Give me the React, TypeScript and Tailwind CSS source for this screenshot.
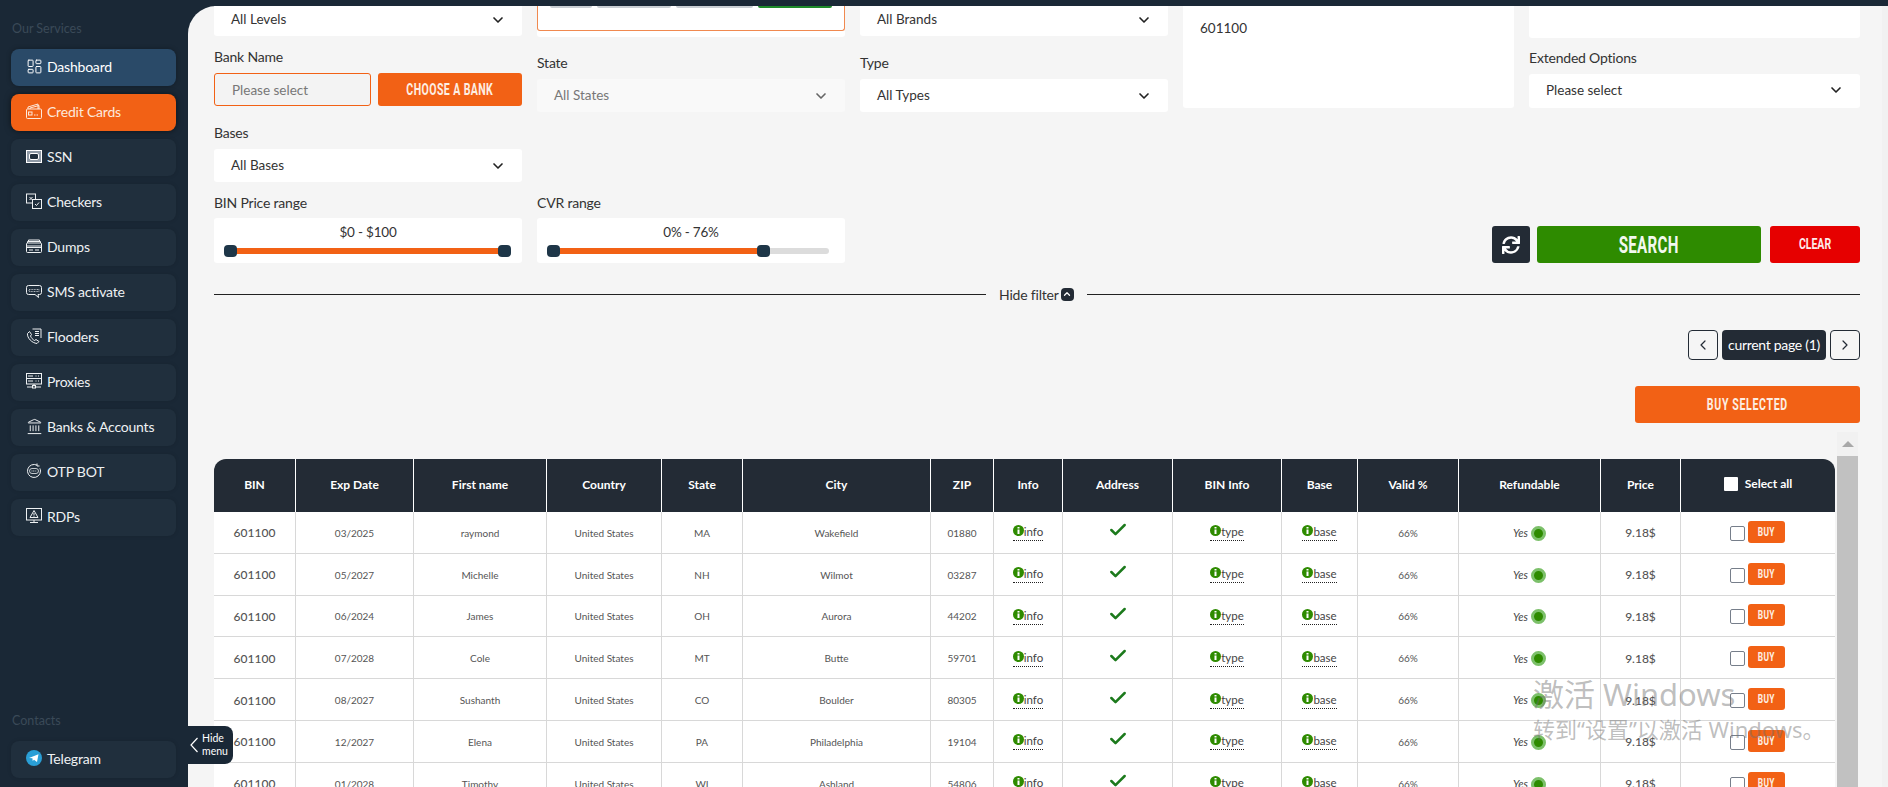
import React from 'react';
import { ChevronDown, ChevronLeft, ChevronRight, ChevronUp, Check, LayoutDashboard, Landmark } from 'lucide-react';
import { FaSync } from 'react-icons/fa';

const Ic = ({ children }: { children: React.ReactNode }) => (
  <svg width="16" height="16" viewBox="0 0 16 16" fill="none" stroke="currentColor" strokeWidth="1" className="shrink-0">
    {children}
  </svg>
);

const menu = [
  { label: 'Dashboard', icon: <LayoutDashboard size={17} strokeWidth={1.4} className="shrink-0 -mx-[0.5px]" />, kind: 'blue' },
  {
    label: 'Credit Cards',
    kind: 'orange',
    icon: (
      <Ic>
        <rect x="0.5" y="6" width="15" height="9.5" rx="1" />
        <path d="M2 6V4l10-3v5M4 6V5l9-2.5V6" />
        <rect x="2.5" y="9" width="3.5" height="3" />
        <path d="M8 12h5" strokeDasharray="1.5 1" />
      </Ic>
    ),
  },
  {
    label: 'SSN',
    icon: (
      <Ic>
        <rect x="0.5" y="2.5" width="15" height="12" fill="#8f9aa6" stroke="#fff" />
        <rect x="3.5" y="5.5" width="9" height="6" rx="1.5" fill="#202f3d" stroke="#fff" />
      </Ic>
    ),
  },
  {
    label: 'Checkers',
    icon: (
      <Ic>
        <rect x="0.5" y="1" width="9" height="9" />
        <rect x="6.5" y="6.5" width="9" height="9" fill="#202f3d" />
        <path d="M3.5 4l3 3M6.5 4l-3 3M9 11l1.5 1.5L13 9.5" />
      </Ic>
    ),
  },
  {
    label: 'Dumps',
    icon: (
      <Ic>
        <path d="M2.5 3.5V2h11v1.5M1.5 5V3.5h13V5" />
        <rect x="0.5" y="5" width="15" height="9.5" rx="1" />
        <path d="M0.5 8h15M0.5 9.5h15M3 12h4M9 12h4" />
      </Ic>
    ),
  },
  {
    label: 'SMS activate',
    icon: (
      <Ic>
        <path d="M2.5 2.5h11a2 2 0 0 1 2 2v5a2 2 0 0 1-2 2H12l.5 3L9 11.5H2.5a2 2 0 0 1-2-2v-5a2 2 0 0 1 2-2z" />
        <path d="M3 6.5h10v2H3z" strokeWidth="0.7" strokeDasharray="1 0.6" />
      </Ic>
    ),
  },
  {
    label: 'Flooders',
    icon: (
      <Ic>
        <path d="M1.5 5.5l2-2 2 3-1 1.5c.8 2 2.2 3.5 4 4.5l1.5-1 3 2-2 2C6 15 1 10 1.500 5.500z" />
        <path d="M6.500 1h8.500v9M9 3.500h4M9 5.500h4M9 7.500h4" />
      </Ic>
    ),
  },
  {
    label: 'Proxies',
    icon: (
      <Ic>
        <rect x="0.500" y="0.500" width="15" height="5" />
        <rect x="0.500" y="5.500" width="15" height="5.500" />
        <path d="M2 3h5M9.500 3h1M12 3h1M2 8h5M9.500 8h1M12 8h1M8 11v2.500M1 14h5.500M9.500 14H15" />
        <rect x="6.500" y="12.500" width="3" height="2.500" />
      </Ic>
    ),
  },
  { label: 'Banks & Accounts', icon: <Landmark size={17} strokeWidth={1.4} className="shrink-0 -mx-[0.5px]" /> },
  {
    label: 'OTP BOT',
    icon: (
      <Ic>
        <path d="M14.500 8A6.500 6.500 0 1 1 11 2.200M14.500 8c0-1-.2-1.800-.6-2.600M11 0.500v2.500h2.500" />
        <rect x="3.500" y="5.500" width="9" height="5" rx="2.500" strokeWidth="0.8" />
        <path d="M5.500 8h5" strokeWidth="0.8" strokeDasharray="1 0.6" />
      </Ic>
    ),
  },
  {
    label: 'RDPs',
    icon: (
      <Ic>
        <rect x="0.500" y="0.500" width="15" height="11.500" />
        <path d="M8 2.500l4 7H4zM8 5v2.500M8 8.300v.700M4 14.500h8M8 12v2.500" />
      </Ic>
    ),
  },
];

const SideItem = ({ label, icon, kind }: { label: string; icon: React.ReactNode; kind?: string }) => (
  <div
    className={
      'flex h-[37px] w-[165px] items-center gap-[5px] rounded-[8px] pb-[3px] pl-[15px] pr-1 text-[14px] tracking-[-0.2px] ' +
      (kind === 'orange'
        ? 'bg-[#f26115] text-[#fde9dc] shadow-[0_0_6px_rgba(0,0,0,0.55)]'
        : kind === 'blue'
          ? 'bg-[#2a4a68] text-white shadow-[0_0_5px_rgba(0,0,0,0.3)]'
          : 'bg-[#202f3d] text-[#eef1f3] shadow-[0_0_4px_rgba(0,0,0,0.12)]')
    }
  >
    {icon}
    <span className="whitespace-nowrap">{label}</span>
  </div>
);

const Sidebar = () => (
  <aside className="flex h-[787px] w-[188px] shrink-0 flex-col justify-between bg-[#1a2836] pb-[9px] pl-[11px] pt-[21px]">
    <div>
      <div className="ml-px h-[16px] text-[12.5px] leading-[16px] text-[#3a4a58]">Our Services</div>
      <div className="mt-[12px] flex flex-col gap-[8px]">
        {menu.map((m) => (
          <SideItem key={m.label} {...m} />
        ))}
      </div>
    </div>
    <div>
      <div className="mb-[12px] ml-px h-[16px] text-[12.5px] leading-[16px] text-[#3a4a58]">Contacts</div>
      <SideItem
        label="Telegram"
        icon={
          <svg width="16" height="16" viewBox="0 0 16 16" className="shrink-0">
            <circle cx="8" cy="8" r="8" fill="#2a9fd6" />
            <path d="M3 8l9.500-3.700L11 12 8 9.800 6.700 11l-.3-2.700L3 8z" fill="#fff" />
          </svg>
        }
      />
    </div>
  </aside>
);

const Label = ({ children, className = '' }: { children: React.ReactNode; className?: string }) => (
  <div className={'h-[20px] text-[14px] leading-[20px] tracking-[-0.2px] text-[#333] ' + className}>{children}</div>
);

const Select = ({ text, disabled, className = '' }: { text: string; disabled?: boolean; className?: string }) => (
  <div
    className={
      'flex h-[33px] items-center justify-between rounded-[3px] pl-[17px] pr-[16px] text-[13.5px] ' +
      (disabled ? 'bg-[#f9f9f9] text-[#777] ' : 'bg-white text-[#333] ') +
      className
    }
  >
    <span>{text}</span>
    <ChevronDown size={16} strokeWidth={2.5} className={disabled ? 'text-[#666]' : 'text-[#222]'} />
  </div>
);

// buttons use a narrow display face in the original, squeezed Roboto stands in for it
const Narrow = ({ children, className = '' }: { children: React.ReactNode; className?: string }) => (
  <span className={'inline-block whitespace-nowrap font-["Roboto",sans-serif] font-bold ' + className}>{children}</span>
);

const Slider = ({ text, end, wide }: { text: string; end: number; wide?: boolean }) => (
  <div className="h-[45px] rounded-[3px] bg-white pt-[4px]">
    <div className="text-center text-[13.5px] leading-[20px] tracking-[-0.2px] text-[#333]">{text}</div>
    <div className={'relative ml-[10px] mt-[6px] h-[6px] rounded-full bg-[#dcdcdc] ' + (wide ? 'mr-[11px]' : 'mr-[16px]')}>
      <div className="h-[6px] rounded-full bg-[#f26115]" style={{ width: `${end}%` }} />
      <span className="absolute -top-[3px] left-0 h-[12px] w-[13px] rounded-[4px] bg-[#1e3648]" />
      <span className="absolute -top-[3px] h-[12px] w-[13px] -translate-x-full rounded-[4px] bg-[#1e3648]" style={{ left: `${end}%` }} />
    </div>
  </div>
);

const Filters = () => (
  <>
    <div className="-mt-[3px] grid grid-cols-[308px_308px_308px_331px_331px] gap-x-[15px]">
      <div>
        <Select text="All Levels" />
        <Label className="mt-[11px]">Bank Name</Label>
        <div className="mt-[6px] flex h-[33px] gap-[7px]">
          <div className="flex w-[157px] items-center rounded-[3px] border border-[#f26115] bg-[#f3f3f3] pl-[17px] pt-[1px] text-[13.5px] text-[#777]">
            Please select
          </div>
          <div className="flex flex-1 items-center justify-center rounded-[3px] bg-[#f26115] text-[#fdeee3]">
            <Narrow className="scale-x-[0.66] text-[16px] tracking-[0.6px]">CHOOSE A BANK</Narrow>
          </div>
        </div>
        <Label className="mt-[17px]">Bases</Label>
        <Select text="All Bases" className="mt-[6px]" />
      </div>
      <div>
        <div className="h-[34px] rounded-[3px] bg-white">
          <div className="flex h-[28px] gap-[5px] rounded-b-[3px] border border-t-0 border-[#f0894f] px-[12px]">
            <div className="h-[5px] w-[42px] rounded-b-[2px] bg-[#c9ced3]" />
            <div className="h-[5px] w-[74px] rounded-b-[2px] bg-[#c9ced3]" />
            <div className="h-[5px] w-[78px] rounded-b-[2px] bg-[#c9ced3]" />
            <div className="h-[5px] w-[74px] rounded-b-[2px] bg-[#1f8a2a]" />
          </div>
        </div>
        <Label className="mt-[16px]">State</Label>
        <Select text="All States" disabled className="mt-[6px]" />
      </div>
      <div>
        <Select text="All Brands" />
        <Label className="mt-[17px]">Type</Label>
        <Select text="All Types" className="mt-[6px]" />
      </div>
      <div className="h-[105px] rounded-[3px] bg-white pl-[17px] pt-[15px] text-[13.5px] leading-[20px] text-[#333]">601100</div>
      <div>
        <div className="h-[35px] rounded-[3px] bg-white" />
        <Label className="mt-[10px]">Extended Options</Label>
        <Select text="Please select" className="mt-[6px] h-[34px] pb-[2px]" />
      </div>
    </div>

    <div className="mt-[11px] grid grid-cols-[308px_308px_1fr] gap-x-[15px]">
      <div>
        <Label>BIN Price range</Label>
        <div className="mt-[5px]">
          <Slider text="$0 - $100" end={100} wide />
        </div>
      </div>
      <div>
        <Label>CVR range</Label>
        <div className="mt-[5px]">
          <Slider text="0% - 76%" end={79} />
        </div>
      </div>
      <div className="flex items-end justify-end">
        <div className="mr-[7px] flex h-[37px] w-[38px] items-center justify-center rounded-[3px] bg-[#232b35] text-white">
          <FaSync size={18} />
        </div>
        <div className="mr-[9px] flex h-[37px] w-[224px] items-center justify-center rounded-[3px] bg-[#2e8b00] text-[#f2f8ee]">
          <Narrow className="scale-x-[0.63] text-[24px] tracking-[0.5px]">SEARCH</Narrow>
        </div>
        <div className="flex h-[37px] w-[90px] items-center justify-center rounded-[3px] bg-[#e60000] text-[#fdeaea]">
          <Narrow className="scale-x-[0.7] text-[15px]">CLEAR</Narrow>
        </div>
      </div>
    </div>

    <div className="mt-[21px] flex h-[20px] items-center">
      <div className="h-px w-[772px] bg-[#222]" />
      <div className="ml-[13px] flex w-[77px] shrink-0 items-center gap-[2px] text-[14px] tracking-[-0.2px] text-[#333]">
        <span className="whitespace-nowrap">Hide filter</span>
        <span className="flex h-[13px] w-[13px] shrink-0 items-center justify-center rounded-[4px] bg-[#232b35] text-white">
          <ChevronUp size={10} strokeWidth={3} />
        </span>
      </div>
      <div className="ml-[11px] h-px flex-1 bg-[#222]" />
    </div>

    <div className="mt-[26px] flex justify-end gap-[4px]">
      <div className="flex h-[30px] w-[30px] items-center justify-center rounded-[4px] border border-[#232b35] text-[#232b35]">
        <ChevronLeft size={16} strokeWidth={1.8} />
      </div>
      <div className="flex h-[30px] w-[104px] items-center justify-center rounded-[4px] bg-[#232b35] pb-[2px] text-[14px] tracking-[-0.3px] text-white">
        current page (1)
      </div>
      <div className="flex h-[30px] w-[30px] items-center justify-center rounded-[4px] border border-[#232b35] text-[#232b35]">
        <ChevronRight size={16} strokeWidth={1.8} />
      </div>
    </div>

    <div className="mt-[26px] flex justify-end">
      <div className="flex h-[37px] w-[225px] items-center justify-center rounded-[3px] bg-[#f26115] text-[#fdeee3]">
        <Narrow className="scale-x-[0.66] text-[16px] tracking-[1px]">BUY SELECTED</Narrow>
      </div>
    </div>
  </>
);

const rows = [
  ['03/2025', 'raymond', 'MA', 'Wakefield', '01880'],
  ['05/2027', 'Michelle', 'NH', 'Wilmot', '03287'],
  ['06/2024', 'James', 'OH', 'Aurora', '44202'],
  ['07/2028', 'Cole', 'MT', 'Butte', '59701'],
  ['08/2027', 'Sushanth', 'CO', 'Boulder', '80305'],
  ['12/2027', 'Elena', 'PA', 'Philadelphia', '19104'],
  ['01/2028', 'Timothy', 'WI', 'Ashland', '54806'],
];

const InfoTag = ({ text }: { text: string }) => (
  <span className="inline-flex items-center border-b border-dotted border-[#222] pb-[2px] text-[11.5px] leading-[13px] text-[#444]">
    <svg width="11" height="11" viewBox="0 0 11 11" className="mb-[2px] shrink-0">
      <circle cx="5.500" cy="5.500" r="5.500" fill="#2e8b00" />
      <path d="M5.500 2v1.500M5.500 4.500v4.500" stroke="#fff" strokeWidth="2" />
    </svg>
    {text}
  </span>
);

const thCls = 'border-r border-white bg-[#232b35] pb-[1px] text-center text-[12px] font-bold text-white ';
const tdCls = 'border-b border-r border-[#d8d8d8] bg-white p-0 pt-[2px] text-center text-[10px] text-[#555] ';

const DataTable = () => (
  <table className="w-[1621px] table-fixed border-separate border-spacing-0">
    <colgroup>
      <col className="w-[82px]" />
      <col className="w-[118px]" />
      <col className="w-[133px]" />
      <col className="w-[115px]" />
      <col className="w-[81px]" />
      <col className="w-[188px]" />
      <col className="w-[63px]" />
      <col className="w-[69px]" />
      <col className="w-[110px]" />
      <col className="w-[109px]" />
      <col className="w-[76px]" />
      <col className="w-[101px]" />
      <col className="w-[142px]" />
      <col className="w-[80px]" />
      <col className="w-[154px]" />
    </colgroup>
    <thead>
      <tr className="h-[53px]">
        <th className={thCls + 'rounded-tl-[12px]'}>BIN</th>
        {['Exp Date', 'First name', 'Country', 'State', 'City', 'ZIP', 'Info', 'Address', 'BIN Info', 'Base', 'Valid %', 'Refundable', 'Price'].map((h) => (
          <th key={h} className={thCls}>
            {h}
          </th>
        ))}
        <th className={thCls + 'rounded-tr-[12px] border-r-0 pb-0 pt-[1px]'}>
          <span className="inline-flex items-center gap-[7px]">
            <span className="h-[14px] w-[14px] rounded-[1px] bg-white" />
            Select all
          </span>
        </th>
      </tr>
    </thead>
    <tbody>
      {rows.map((r) => (
        <tr key={r[0]} className="h-[41.8px]">
          <td className={tdCls + 'text-[12px] font-medium text-[#222]'}>601100</td>
          <td className={tdCls}>{r[0]}</td>
          <td className={tdCls}>{r[1]}</td>
          <td className={tdCls}>United States</td>
          <td className={tdCls}>{r[2]}</td>
          <td className={tdCls}>{r[3]}</td>
          <td className={tdCls}>{r[4]}</td>
          <td className={tdCls}>
            <InfoTag text="info" />
          </td>
          <td className={tdCls}>
            <Check size={20} strokeWidth={3} className="mx-auto mb-[6px] text-[#1c7a1c]" />
          </td>
          <td className={tdCls}>
            <InfoTag text="type" />
          </td>
          <td className={tdCls}>
            <InfoTag text="base" />
          </td>
          <td className={tdCls}>66%</td>
          <td className={tdCls}>
            <span className="inline-flex items-center gap-[3px] text-[11px] italic text-[#444]">
              Yes
              <span className="h-[15px] w-[15px] rounded-full border-[3px] border-[#7cc06a] bg-[#2e8b00]" />
            </span>
          </td>
          <td className={tdCls + 'text-[12px] font-medium text-[#222]'}>9.18$</td>
          <td className={tdCls + 'border-r-0 pr-[2px]'}>
            <span className="inline-flex items-center gap-[3px]">
              <span className="h-[15px] w-[15px] rounded-[2px] border border-[#767e8a] bg-white" />
              <span className="mb-[3px] flex h-[22px] w-[37px] items-center justify-center rounded-[3px] bg-[#f26115] text-[#fdeee3]">
                <Narrow className="scale-x-[0.7] text-[12px] tracking-[0.5px]">BUY</Narrow>
              </span>
            </span>
          </td>
        </tr>
      ))}
    </tbody>
  </table>
);

const App = () => (
  <div className="relative flex h-[787px] w-[1888px] overflow-hidden bg-[#1a2836] font-['Lato',sans-serif]">
    <Sidebar />
    <main className="mt-[6px] flex h-[781px] flex-1 overflow-hidden rounded-tl-[28px] bg-[#f5f5f5]">
      <div className="flex min-w-0 flex-1 flex-col pl-[26px] pr-[22px]">
        <Filters />
        <div className="mt-[9px] flex min-h-0 flex-1 gap-[2px] overflow-hidden">
          <div className="pt-[27px]">
            <DataTable />
          </div>
          <div className="flex w-[21px] flex-col bg-[#f1f1f1]">
            <div className="flex h-[24px] items-center justify-center">
              <span className="h-0 w-0 border-x-[6px] border-b-[6px] border-x-transparent border-b-[#a8a8a8]" />
            </div>
            <div className="flex-1 bg-[#c1c1c1]" />
          </div>
        </div>
      </div>
      <div className="w-[6px] bg-[#f1f1f1]" />
    </main>

    {/* collapse tab sits on top of the sidebar edge */}
    <div className="absolute left-[188px] top-[726px] flex h-[38px] w-[45px] items-center rounded-r-[8px] bg-[#1a2836] pl-[2px] text-white">
      <svg width="9" height="16" viewBox="0 0 9 16" fill="none" stroke="currentColor" strokeWidth="1.2" className="shrink-0">
        <path d="M7.500 1L1 8l6.500 7" />
      </svg>
      <span className="ml-[3px] text-[10.5px] leading-[13px]">
        Hide
        <br />
        menu
      </span>
    </div>

    {/* os activation watermark */}
    <div className="pointer-events-none absolute left-[1533px] top-[674px] whitespace-nowrap font-['Noto_Sans','Noto_Sans_CJK_SC',sans-serif] text-[rgba(110,110,110,0.45)]">
      <div className="text-[31px] leading-[40px]">激活 Windows</div>
      <div className="text-[22px] leading-[30px]">转到“设置”以激活 Windows。</div>
    </div>
  </div>
);

export default App;
